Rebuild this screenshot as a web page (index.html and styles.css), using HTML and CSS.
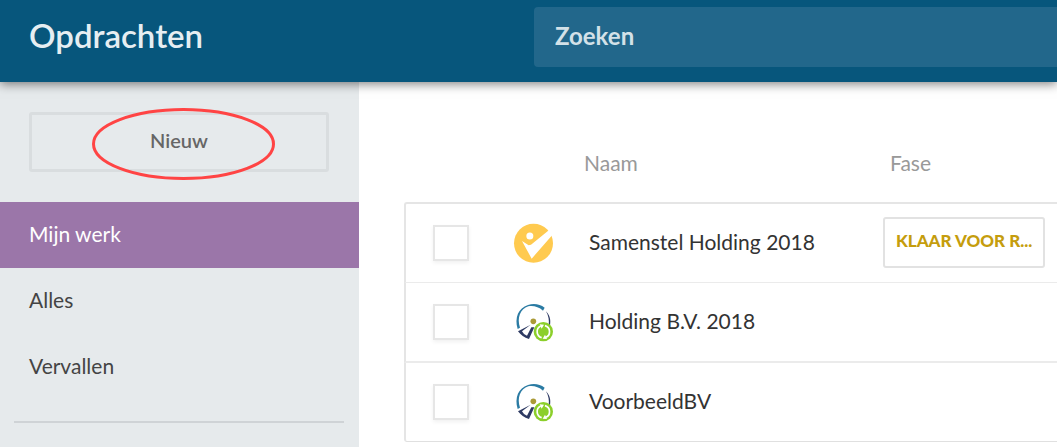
FILE: index.html
```html
<!DOCTYPE html>
<html lang="nl">
<head>
<meta charset="utf-8">
<meta name="viewport" content="width=device-width, initial-scale=1">
<title>Opdrachten</title>
<link rel="stylesheet" href="styles.css">
</head>
<body>
<svg class="sprite" aria-hidden="true">
  <symbol id="icon-check" viewBox="39 37 120 120">
    <circle cx="100.500" cy="97.500" r="58.500" fill="#ffca4f"/>
    <path d="M66 91 L86 104 L93 102 L152 54 L165 64 L95 144 Z" fill="#fff"/>
    <circle cx="89.500" cy="76" r="10.500" fill="#fff"/>
  </symbol>
  <symbol id="icon-dial" viewBox="24 36 120 120">
    <path d="M38 117 C28 83 40 54 69 45 C88 39 105 43 119 53 L114 62 C101 50 84 46 70 49 C46 57 35 84 45 113 Z" fill="#2b7ba3"/>
    <path d="M123 64 C134 76 138 88 135 106 L131 106 C133 90 131 79 123 64 Z" fill="#2e3a63"/>
    <path d="M39 124 L77 104 L51 124 L57 132 L66 137 L79 112 L88 112 L72 147 C58 143 47 135 39 124 Z" fill="#2e3a63"/>
    <circle cx="85" cy="94" r="8.500" fill="#aa9a36"/>
    <circle cx="115" cy="125" r="29" fill="#8ccf2b"/>
    <g fill="none" stroke="#fff" stroke-width="5">
      <path d="M110 143 C93 138 92 115 107 108"/>
      <path d="M120 107 C137 112 138 135 123 142"/>
    </g>
    <path d="M104 103 L117 104 L110 116 Z M126 147 L113 146 L120 134 Z" fill="#fff"/>
  </symbol>
</svg>

<header class="topbar">
  <h1 class="topbar-title">Opdrachten</h1>
  <form class="search" role="search">
    <input class="search-input" type="search" placeholder="Zoeken" aria-label="Zoeken">
  </form>
</header>

<div class="layout">
  <aside class="sidebar">
    <div class="create">
      <button class="create-button" type="button">Nieuw</button>
      <svg class="create-mark" viewBox="0 0 184 72" aria-hidden="true">
        <ellipse cx="91.500" cy="36" rx="90" ry="34.500" fill="none" stroke="#ff4444" stroke-width="3"/>
      </svg>
    </div>
    <nav class="menu">
      <a class="menu-item menu-item-active" href="#mijn-werk" aria-current="page">Mijn werk</a>
      <a class="menu-item" href="#alles">Alles</a>
      <a class="menu-item" href="#vervallen">Vervallen</a>
    </nav>
    <hr class="divider">
  </aside>

  <main class="content">
    <table class="jobs">
      <colgroup>
        <col class="col-select">
        <col class="col-type">
        <col>
        <col class="col-phase">
      </colgroup>
      <thead>
        <tr><th></th><th></th><th scope="col">Naam</th><th scope="col">Fase</th></tr>
      </thead>
      <tbody>
        <tr>
          <td class="cell-select"><input class="check" type="checkbox" aria-label="Samenstel Holding 2018"></td>
          <td class="cell-type"><svg class="icon" aria-hidden="true"><use href="#icon-check"/></svg></td>
          <td class="cell-name">Samenstel Holding 2018</td>
          <td class="cell-phase"><button class="phase" type="button">KLAAR VOOR R...</button></td>
        </tr>
        <tr>
          <td class="cell-select"><input class="check" type="checkbox" aria-label="Holding B.V. 2018"></td>
          <td class="cell-type"><svg class="icon" aria-hidden="true"><use href="#icon-dial"/></svg></td>
          <td class="cell-name">Holding B.V. 2018</td>
          <td></td>
        </tr>
        <tr>
          <td class="cell-select"><input class="check" type="checkbox" aria-label="VoorbeeldBV"></td>
          <td class="cell-type"><svg class="icon" aria-hidden="true"><use href="#icon-dial"/></svg></td>
          <td class="cell-name">VoorbeeldBV</td>
          <td></td>
        </tr>
      </tbody>
    </table>
  </main>
</div>
</body>
</html>
```
FILE: styles.css
```css
* { box-sizing: border-box; }

body {
  display: flex;
  flex-direction: column;
  min-height: 100vh;
  margin: 0;
  background: #fff;
  color: #333;
  font: 400 21px/26px Lato, "Open Sans", sans-serif;
}

.sprite { position: absolute; width: 0; height: 0; }

.topbar {
  position: relative;
  z-index: 1;
  display: flex;
  align-items: flex-start;
  padding: 7px 0 15px 29px;
  background: #07567c;
  box-shadow: 0 2px 10px rgba(0, 0, 0, 0.5);
}

.topbar-title {
  flex: 0 0 505px;
  margin: 0;
  color: #e6eef2;
  font-size: 33px;
  font-weight: 600;
  line-height: 56px;
}

.search { flex: 1; }

.search-input {
  display: block;
  width: 100%;
  height: 60px;
  padding: 0 21px 4px;
  border: 0;
  border-radius: 4px 0 0 4px;
  background: #22678b;
  color: #d3e1e8;
  font: 700 24px/30px Lato, "Open Sans", sans-serif;
}

.search-input::placeholder { color: #d3e1e8; opacity: 1; }

.layout { display: flex; flex: 1; }

.sidebar {
  flex: 0 0 359px;
  padding-top: 30px;
  background: #e6eaec;
}

.create { position: relative; margin: 0 30px 30px 29px; }

.create-button {
  display: block;
  width: 100%;
  height: 60px;
  padding: 0 0 4px;
  border: 3px solid #d9dddf;
  border-radius: 3px;
  background: transparent;
  color: #666;
  font: 600 20px/24px Lato, "Open Sans", sans-serif;
}

/* Highlight drawn over the button */
.create-mark {
  position: absolute;
  top: -4px;
  left: 63px;
  width: 184px;
  height: 72px;
  pointer-events: none;
}

.menu-item {
  display: block;
  padding: 19px 29px 21px;
  color: #444;
  text-decoration: none;
}

.menu-item-active { background: #9b76a9; color: #fff; }

.divider {
  height: 2px;
  margin: 21px 15px 0 14px;
  border: 0;
  background: #cfd3d6;
}

.content { flex: 1; min-width: 0; padding-left: 45px; }

.jobs {
  width: 100%;
  table-layout: fixed;
  border-collapse: separate;
  border-spacing: 0;
}

.col-select { width: 94px; }
.col-type { width: 75px; }
.col-phase { width: 178px; }

.jobs th {
  height: 120px;
  padding: 42px 11px 0;
  color: #999;
  font-weight: 400;
  text-align: left;
}

.jobs td {
  height: 79px;
  padding: 0;
  border-bottom: 1px solid #ebebeb;
}

.jobs tbody tr:first-child td { height: 81px; border-top: 2px solid #e5e5e5; }
.jobs tbody tr:nth-child(2) td { height: 80px; border-bottom-width: 2px; }
.jobs tbody tr:last-child td { border-bottom-color: #e0e0e0; }
.jobs td:first-child { border-left: 2px solid #e5e5e5; }
.jobs tbody tr:first-child td:first-child { border-top-left-radius: 3px; }
.jobs tbody tr:last-child td:first-child { border-bottom-left-radius: 3px; }

.jobs .cell-select { padding-left: 27px; }
.jobs .cell-type { padding-left: 15px; }
.jobs .cell-name { padding: 0 8px 3px 16px; }
.jobs .cell-phase { padding: 0 12px 2px 4px; }

.check {
  display: block;
  width: 36px;
  height: 36px;
  margin: 0;
  appearance: none;
  border: 2px solid #e6e6e6;
  background: #fff;
  box-shadow: 0 2px 4px rgba(0, 0, 0, 0.06);
}

.icon { display: block; width: 40px; height: 40px; }

.phase {
  display: block;
  width: 100%;
  height: 51px;
  padding: 0 4px 2px 11px;
  overflow: hidden;
  border: 2px solid #e2e2e2;
  border-radius: 3px;
  background: #fff;
  color: #c59d0d;
  font: 900 17px/24px Lato, "Open Sans", sans-serif;
  text-align: left;
  text-overflow: ellipsis;
  white-space: nowrap;
}
```
